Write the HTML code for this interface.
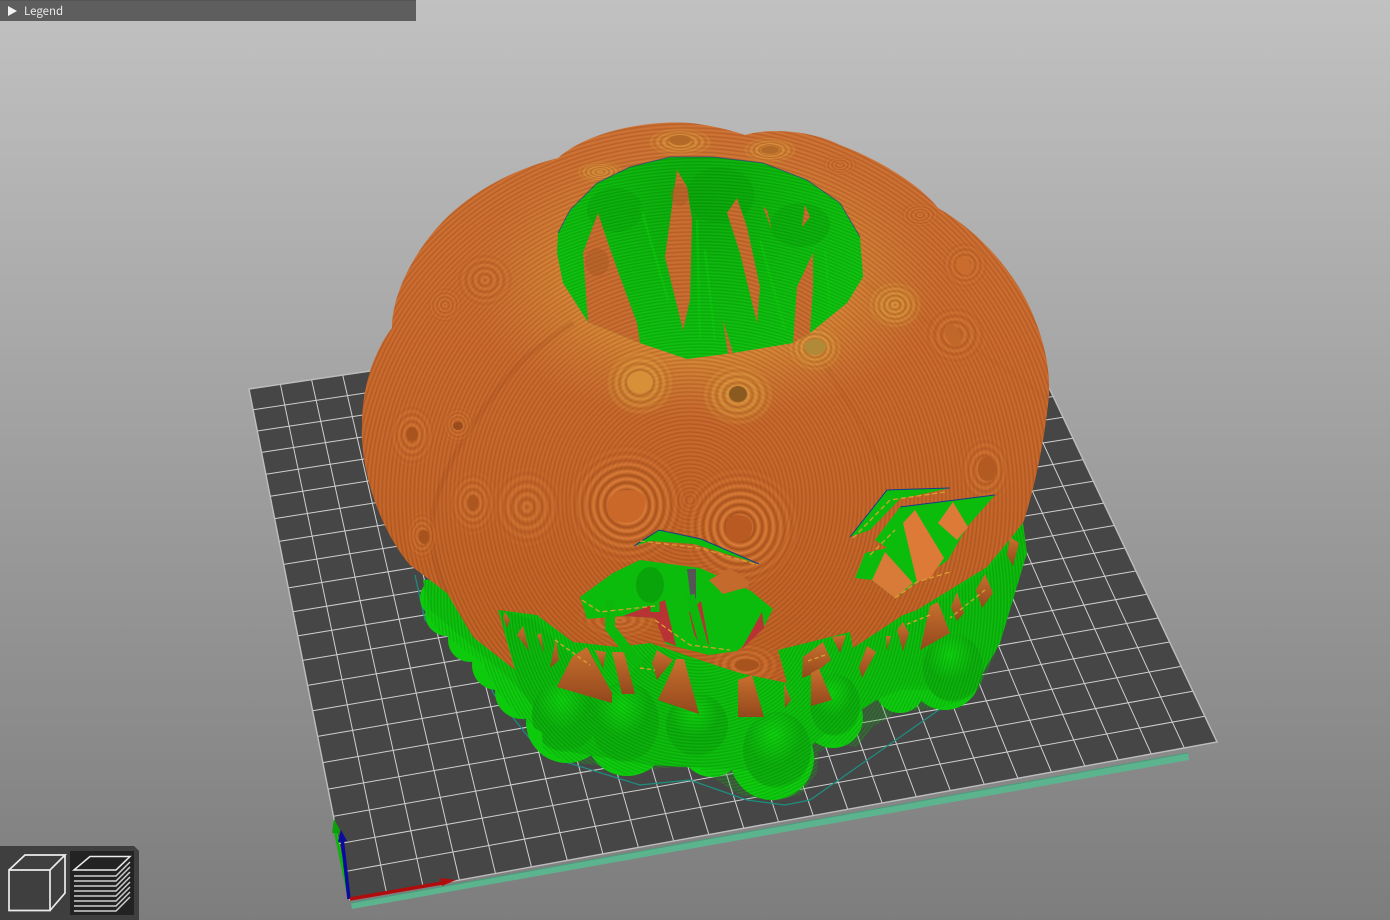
<!DOCTYPE html>
<html lang="en">
<head>
<meta charset="utf-8">
<title>Legend</title>
<style>
html,body{margin:0;padding:0;width:1390px;height:920px;overflow:hidden;background:#a0a0a0}
#s{position:absolute;left:0;top:0;width:1390px;height:920px;display:block}
#legend{position:absolute;left:0;top:0;width:416px;height:21px;background:#5e5e5e;border-top:1px solid #545454;box-sizing:border-box}
#legend .t{position:absolute;left:8px;top:5px;width:0;height:0;border-left:9px solid #f2f2f2;border-top:5px solid transparent;border-bottom:5px solid transparent}
#legend .l{position:absolute;left:24px;top:2px;font:11.5px/17px "Noto Sans CJK JP","Liberation Sans",sans-serif;color:#e8e8e8}
</style>
</head>
<body>
<svg id="s" xmlns="http://www.w3.org/2000/svg" width="1390" height="920" viewBox="0 0 1390 920">
<defs>
<linearGradient id="bg" x1="0" y1="0" x2="0" y2="1"><stop offset="0" stop-color="#c1c1c1"/><stop offset="1" stop-color="#7d7d7d"/></linearGradient>
<linearGradient id="body" x1="0" y1="0" x2="0" y2="1"><stop offset="0" stop-color="#cc7033"/><stop offset=".4" stop-color="#c7662c"/><stop offset="1" stop-color="#b85a20"/></linearGradient>
<radialGradient id="gold" gradientUnits="userSpaceOnUse" cx="705" cy="280" r="235" gradientTransform="translate(705 280) scale(1 .6) translate(-705 -280)"><stop offset="0" stop-color="#e6a63c" stop-opacity=".95"/><stop offset=".6" stop-color="#dd9a3a" stop-opacity=".6"/><stop offset="1" stop-color="#d08a38" stop-opacity="0"/></radialGradient>
<radialGradient id="fine" gradientUnits="userSpaceOnUse" cx="690" cy="500" r="4" spreadMethod="repeat"><stop offset="0" stop-color="#8f4214" stop-opacity=".38"/><stop offset=".5" stop-color="#e88d48" stop-opacity=".18"/><stop offset="1" stop-color="#8f4214" stop-opacity=".38"/></radialGradient>
<radialGradient id="r1" cx=".5" cy=".5" r=".06" spreadMethod="repeat"><stop offset="0" stop-color="#a34e1b"/><stop offset=".5" stop-color="#e0823c"/><stop offset="1" stop-color="#a34e1b"/></radialGradient>
<radialGradient id="r2" cx=".5" cy=".5" r=".1" spreadMethod="repeat"><stop offset="0" stop-color="#ac5520"/><stop offset=".5" stop-color="#d97e3a"/><stop offset="1" stop-color="#ac5520"/></radialGradient>
<radialGradient id="r3" cx=".5" cy=".5" r=".09" spreadMethod="repeat"><stop offset="0" stop-color="#b06a24"/><stop offset=".5" stop-color="#e8aa48"/><stop offset="1" stop-color="#b06a24"/></radialGradient>
<radialGradient id="fg" cx=".5" cy=".5" r=".5"><stop offset="0" stop-color="#fff"/><stop offset=".55" stop-color="#fff" stop-opacity=".8"/><stop offset="1" stop-color="#fff" stop-opacity="0"/></radialGradient>
<mask id="fade" maskContentUnits="objectBoundingBox"><rect width="1" height="1" fill="url(#fg)"/></mask>
<radialGradient id="gf" gradientUnits="userSpaceOnUse" cx="700" cy="600" r="3.2" spreadMethod="repeat"><stop offset="0" stop-color="#007a00" stop-opacity=".28"/><stop offset=".5" stop-color="#20e020" stop-opacity=".22"/><stop offset="1" stop-color="#007a00" stop-opacity=".28"/></radialGradient>
<linearGradient id="gt" x1="0" y1="0" x2="1" y2="0"><stop offset="0" stop-color="#0ab00a"/><stop offset=".5" stop-color="#0cbc0c"/><stop offset="1" stop-color="#0ab40a"/></linearGradient>
<radialGradient id="ball" cx=".45" cy=".3" r=".72"><stop offset="0" stop-color="#0ed20e"/><stop offset=".55" stop-color="#0aa60a"/><stop offset=".92" stop-color="#0aa60a" stop-opacity=".9"/><stop offset="1" stop-color="#0aa60a" stop-opacity="0"/></radialGradient>
<radialGradient id="hole" gradientUnits="userSpaceOnUse" cx="700" cy="200" r="170"><stop offset="0" stop-color="#0aa20a"/><stop offset=".5" stop-color="#0cb40c"/><stop offset="1" stop-color="#0fbe0f"/></radialGradient>
<linearGradient id="lowo" x1="0" y1="0" x2="0" y2="1"><stop offset="0" stop-color="#c8702e"/><stop offset="1" stop-color="#93481c"/></linearGradient>
<clipPath id="shell"><path d="M498,610 L537,615 L573,642 L617,647 L650,643 L700,660 L740,673 L787,683 L778,650 L850,632 L853,648 L903,615 L917,610 L987,567 L1023,523 C1033,495 1045,440 1049,395 C1050,370 1045,345 1035,320 C1020,280 985,235 938,208 C920,185 880,160 840,145 C810,130 770,128 745,135 C730,130 710,125 690,123 C650,120 590,130 558,158 C530,165 490,180 455,210 C420,240 392,290 392,328 C375,350 362,385 362,425 C360,470 380,530 410,565 L447,593 L473,637 L515,670 Z"/></clipPath>
<clipPath id="gclip"><path d="M423,580 L425,613 L440,632 L483,663 L495,688 L517,715 L542,733 L543,750 L567,762 L597,765 L627,775 L660,768 L697,767 L740,795 L773,801 L800,795 L817,773 L818,753 L833,743 L857,747 L873,727 L897,712 L940,708 L973,697 L980,687 L1000,643 L1027,553 L1023,523 Z"/></clipPath>
<clipPath id="holeclip"><polygon points="558,233 570,210 597,183 630,167 670,157 713,157 763,163 807,180 840,203 860,237 863,277 847,303 810,333 793,343 733,353 687,359 640,343 588,322 563,283 557,253"/></clipPath>
</defs>
<rect width="1390" height="920" fill="url(#bg)"/>
<!-- bed -->
<polygon points="249,389 997,278 1217,742 350,900" fill="#464646"/>
<path fill="none" stroke="#cfcfcf" stroke-width="1" d="M280.4,384.3L386.6,893.3M311.6,379.7L423.1,886.7M342.7,375.1L459.4,880.1M373.7,370.5L495.5,873.5M404.6,365.9L531.5,867M435.3,361.4L567.3,860.5M465.9,356.8L602.9,853.9M496.4,352.3L638.4,847.5M526.8,347.8L673.7,841.1M557.1,343.3L708.9,834.7M587.2,338.9L743.8,828.3M617.2,334.4L778.6,822M647.1,330L813.3,815.7M676.9,325.6L847.8,809.4M706.6,321.2L882.2,803.2M736.2,316.8L916.4,797M765.6,312.4L950.4,790.8M794.9,308.1L984.3,784.6M824.2,303.7L1018,778.5M853.3,299.4L1051.6,772.4M882.2,295.1L1085,766.3M911.1,290.8L1118.3,760.2M939.9,286.6L1151.4,754.2M968.6,282.3L1184.4,748.2M253.1,409.8L1006,297.1M257.3,431L1015.2,316.4M261.5,452.4L1024.4,336M265.8,474.2L1033.9,355.9M270.2,496.2L1043.4,376M274.6,518.6L1053.1,396.5M279.1,541.4L1063.2,417.2M283.7,564.4L1072.9,438.2M288.3,587.9L1083.1,459.6M293,611.7L1093.3,481.2M297.8,635.9L1103.6,503.1M302.7,660.4L1114.3,525.5M307.6,685.4L1124.9,548M312.6,710.7L1135.9,571M317.7,736.4L1147,594.3M322.9,762.6L1158.2,618M328.1,789.1L1169.6,642M333.5,816.3L1181.2,666.4M338.9,843.7L1192.9,691.2M344.4,871.6L1204.7,716.3"/>
<polygon points="249,389 997,278 1217,742 350,900" fill="none" stroke="#bdbdbd" stroke-width="1.4"/>
<!-- prime strip -->
<polygon points="351,903 1188,753 1189,760 352,909" fill="#5cb48f"/>
<polyline points="351,903 1188,753" fill="none" stroke="#4b9c7a" stroke-width="1"/>
<!-- skirt -->
<polyline points="415,575 425,620 483,660 493,693 543,755 640,785 690,780 747,800 785,805 810,800 943,707 965,695 985,660 990,610" fill="none" stroke="#1d8f80" stroke-width="1.2"/>
<!-- green brim -->
<g fill="#0dca0d">
<circle cx="440" cy="598" r="20"/><circle cx="447" cy="614" r="22"/><circle cx="470" cy="640" r="22"/><circle cx="497" cy="665" r="25"/><circle cx="522" cy="692" r="27"/>
<circle cx="567" cy="722" r="41"/><circle cx="627" cy="735" r="41"/><circle cx="697" cy="733" r="35"/><circle cx="712" cy="745" r="32"/><circle cx="772" cy="758" r="42"/><circle cx="833" cy="718" r="30"/><circle cx="900" cy="688" r="25"/><circle cx="945" cy="675" r="35"/>
</g>
<path d="M423,580 L430,610 L500,670 L560,730 L700,750 L775,770 L830,720 L900,690 L973,690 L1000,643 L1027,553 L1023,523 L700,560 Z" fill="#0cbc0c"/>
<!-- cones -->
<g clip-path="url(#gclip)">
<path d="M500,610 L535,620 L575,660 L612,700 L640,660 L660,650 L700,670 L740,690 L780,680 L810,660 L850,640 L910,620 L990,570 L1023,523 L1025,560 L1000,640 L975,685 L900,685 L830,730 L780,772 L650,765 L570,752 L520,690 Z" fill="url(#gt)"/>
<ellipse cx="565" cy="715" rx="33" ry="37" fill="url(#ball)"/>
<ellipse cx="625" cy="722" rx="34" ry="40" fill="url(#ball)"/>
<ellipse cx="697" cy="725" rx="31" ry="31" fill="url(#ball)"/>
<ellipse cx="777" cy="750" rx="34" ry="38" fill="url(#ball)"/>
<ellipse cx="835" cy="705" rx="25" ry="31" fill="url(#ball)"/>
<ellipse cx="953" cy="668" rx="30" ry="34" fill="url(#ball)"/>
</g>
<rect x="410" y="500" width="620" height="310" fill="url(#gf)" clip-path="url(#gclip)"/>
<!-- orange behind trees -->
<g fill="url(#lowo)">
<polygon points="557,687 572,657 587,647 612,693 612,703"/>
<polygon points="595,650 603,669 606,652"/>
<polygon points="612,652 624,652 635,694 622,694"/>
<polygon points="657,650 673,660 657,680 652,663"/>
<polygon points="676,659 684,659 699,714 658,700 672,670"/>
<polygon points="738,680 752,675 764,717 738,717"/>
<polygon points="803,657 823,642 831,660 815,673 802,678"/>
<polygon points="832,637 846,635 840,653"/>
<polygon points="811,673 819,669 832,700 811,706"/>
<polygon points="784,683 791,700 785,708"/>
<polygon points="867,646 876,652 862,678 859,667"/>
<polygon points="886,636 891,636 887,651"/>
<polygon points="903,622 909,633 903,651 897,630"/>
<polygon points="930,606 938,602 950,633 920,650 926,623"/>
<polygon points="957,592 964,613 957,621 951,607"/>
<polygon points="985,574 993,593 982,608 976,590"/>
<polygon points="1010,537 1019,543 1013,566 1007,555"/>
<polygon points="517,635 523,626 529,651"/>
<polygon points="537,635 544,653 541,633"/>
<polygon points="556,638 559,660 550,668"/>
<polygon points="505,612 510,620 507,628 503,618"/>
</g>
<path d="M825,655 L805,662 M985,590 L950,618 M930,615 L905,625 M640,668 L655,670 M555,640 L590,665" fill="none" stroke="#d8a030" stroke-width="1.4" stroke-dasharray="4 3"/>
<!-- shell -->
<path d="M498,610 L537,615 L573,642 L617,647 L650,643 L700,660 L740,673 L787,683 L778,650 L850,632 L853,648 L903,615 L917,610 L987,567 L1023,523 C1033,495 1045,440 1049,395 C1050,370 1045,345 1035,320 C1020,280 985,235 938,208 C920,185 880,160 840,145 C810,130 770,128 745,135 C730,130 710,125 690,123 C650,120 590,130 558,158 C530,165 490,180 455,210 C420,240 392,290 392,328 C375,350 362,385 362,425 C360,470 380,530 410,565 L447,593 L473,637 L515,670 Z" fill="url(#body)"/>
<g clip-path="url(#shell)">
<rect x="360" y="120" width="700" height="560" fill="url(#gold)"/>
<rect x="360" y="120" width="700" height="560" fill="url(#fine)"/>
<!-- seams -->
<path d="M447,593 C430,560 430,525 435,505 C445,460 487,400 520,363 C540,345 555,335 573,323" fill="none" stroke="#9a4a1a" stroke-width="5" opacity=".22"/>
<path d="M820,357 C840,390 867,430 880,463" fill="none" stroke="#a8541e" stroke-width="4" opacity=".18"/>
<path d="M865,282 C920,320 1000,360 1048,400" fill="none" stroke="#b25c22" stroke-width="4" opacity=".14"/>
<!-- ring patches -->
<ellipse cx="627" cy="505" rx="62" ry="62" fill="url(#r1)" mask="url(#fade)"/>
<ellipse cx="740" cy="527" rx="62" ry="62" fill="url(#r1)" mask="url(#fade)"/>
<g opacity=".7">
<ellipse cx="527" cy="507" rx="38" ry="42" fill="url(#r2)" mask="url(#fade)"/>
<ellipse cx="473" cy="503" rx="26" ry="34" fill="url(#r2)" mask="url(#fade)"/>
<ellipse cx="412" cy="435" rx="26" ry="34" fill="url(#r2)" mask="url(#fade)"/>
<ellipse cx="458" cy="425" rx="18" ry="20" fill="url(#r2)" mask="url(#fade)"/>
<ellipse cx="422" cy="536" rx="18" ry="26" fill="url(#r2)" mask="url(#fade)"/>
<ellipse cx="985" cy="470" rx="28" ry="36" fill="url(#r2)" mask="url(#fade)"/>
<ellipse cx="955" cy="335" rx="34" ry="32" fill="url(#r2)" mask="url(#fade)"/>
<ellipse cx="965" cy="265" rx="26" ry="26" fill="url(#r2)" mask="url(#fade)"/>
<ellipse cx="640" cy="383" rx="38" ry="36" fill="url(#r3)" mask="url(#fade)"/>
<ellipse cx="738" cy="395" rx="40" ry="34" fill="url(#r3)" mask="url(#fade)"/>
<ellipse cx="815" cy="348" rx="30" ry="26" fill="url(#r3)" mask="url(#fade)"/>
<ellipse cx="895" cy="305" rx="30" ry="26" fill="url(#r3)" mask="url(#fade)"/>
<ellipse cx="680" cy="142" rx="36" ry="16" fill="url(#r3)" mask="url(#fade)"/>
<ellipse cx="770" cy="150" rx="30" ry="14" fill="url(#r3)" mask="url(#fade)"/>
<ellipse cx="600" cy="172" rx="26" ry="12" fill="url(#r3)" mask="url(#fade)"/>
<ellipse cx="840" cy="165" rx="20" ry="12" fill="url(#r2)" mask="url(#fade)"/>
<ellipse cx="920" cy="215" rx="22" ry="14" fill="url(#r2)" mask="url(#fade)"/>
<ellipse cx="620" cy="620" rx="45" ry="22" fill="url(#r2)" mask="url(#fade)"/>
<ellipse cx="745" cy="665" rx="42" ry="26" fill="url(#r2)" mask="url(#fade)"/>
<ellipse cx="485" cy="280" rx="32" ry="30" fill="url(#r2)" mask="url(#fade)"/>
<ellipse cx="445" cy="305" rx="20" ry="20" fill="url(#r2)" mask="url(#fade)"/>
</g>
<!-- eye centres -->
<path d="M627,490 C645,490 649,498 643,512 C638,525 618,526 609,516 C604,502 610,490 627,490Z" fill="#c96828"/>
<path d="M728,517 C745,511 754,520 752,530 C748,544 735,546 726,535 Z" fill="#b85a22"/>
<ellipse cx="412" cy="434" rx="5.5" ry="7" fill="#a8531e"/>
<ellipse cx="458" cy="426" rx="5" ry="4" fill="#9a4c1c"/>
<ellipse cx="473" cy="503" rx="5" ry="8" fill="#ad561f"/>
<ellipse cx="424" cy="537" rx="5" ry="7" fill="#a8531e"/>
<ellipse cx="987" cy="469" rx="9" ry="12" fill="#b35a22"/>
<ellipse cx="953" cy="335" rx="7" ry="12" fill="#c0682a" transform="rotate(-28 953 335)"/>
<ellipse cx="964" cy="266" rx="7" ry="10" fill="#c96c2e" transform="rotate(-30 964 266)"/>
<ellipse cx="640" cy="382" rx="13" ry="11" fill="#d89038"/>
<ellipse cx="738" cy="394" rx="9" ry="8" fill="#8a5a20"/>
<ellipse cx="815" cy="347" rx="11" ry="8" fill="#b08a38"/>
<ellipse cx="680" cy="140" rx="11" ry="5" fill="#b36a28"/>
<ellipse cx="770" cy="150" rx="9" ry="4" fill="#b36a28"/>
<ellipse cx="747" cy="665" rx="12" ry="6" fill="#a8531e"/>
</g>
<!-- top opening -->
<polygon points="558,233 570,210 597,183 630,167 670,157 713,157 763,163 807,180 840,203 860,237 863,277 847,303 810,333 793,343 733,353 687,359 640,343 588,322 563,283 557,253" fill="url(#hole)"/>
<g clip-path="url(#holeclip)">
<g fill="none" stroke="#0ccc0c" stroke-width="2.5" opacity=".6">
<path d="M697,220 L700,340"/><path d="M705,250 L715,340"/><path d="M825,250 L830,310"/><path d="M640,205 L668,300"/><path d="M760,240 L785,330"/>
</g>
<ellipse cx="615" cy="210" rx="28" ry="22" fill="#089a08" opacity=".45"/>
<ellipse cx="720" cy="195" rx="34" ry="28" fill="#089a08" opacity=".5"/>
<ellipse cx="800" cy="225" rx="30" ry="22" fill="#089a08" opacity=".45"/>
<rect x="550" y="150" width="320" height="215" fill="url(#gf)"/>
</g>
<path d="M558,233 L570,210 L597,183 L630,167 L670,157 L713,157 L763,163 L807,180 L840,203 L860,237" fill="none" stroke="#1a3a8a" stroke-width="1" opacity=".6"/>
<g fill="#c66a2e">
<g id="holegaps">
<polygon points="598,213 583,253 588,322 640,343 637,323 620,277 608,243"/>
<polygon points="677,170 665,257 683,330 690,300 692,220 687,187"/>
<polygon points="737,198 727,213 740,253 757,323 760,287 747,227"/>
<polygon points="723,320 733,353 728,354"/>
<polygon points="813,253 797,287 793,343 810,333 813,287"/>
<polygon points="805,205 802,227 810,217"/>
<polygon points="763,207 772,230 767,210"/>
</g>
</g>
<use href="#holegaps" fill="url(#fine)"/>
<ellipse cx="597" cy="262" rx="12" ry="14" fill="#a85a22" opacity=".5"/>
<ellipse cx="680" cy="195" rx="9" ry="11" fill="#a85a22" opacity=".5"/>
<!-- second opening -->
<polygon points="580,597 613,573 640,560 700,568 751,591 773,609 762,630 737,651 709,655 666,644 655,618 623,616 587,619" fill="#0cbc0c"/>
<g fill="#b83434">
<polygon points="623,616 665,600 676,646 664,641 655,618"/>
<polygon points="689,612 701,601 709,644 703,651 694,634"/>
<polygon points="762,612 764,628 741,650"/>
</g>
<polygon points="687,569 696,569 696,601 691,601" fill="#555"/>
<polygon points="709,580 730,568 750,582 748,587 723,594" fill="#c46a2c"/>
<path d="M610,600 L610,628 L640,665" fill="none" stroke="#0cb80c" stroke-width="10"/>
<path d="M655,565 L655,612 M690,595 L705,650" fill="none" stroke="#0cb80c" stroke-width="9"/>
<ellipse cx="650" cy="585" rx="14" ry="18" fill="#09a409"/>
<polygon points="634,546 659,530 701,539 759,564 694,544 651,541" fill="#0cbc0c"/>
<path d="M634,546 L659,530 L701,539 L759,564" fill="none" stroke="#1a3a8a" stroke-width="1"/>
<path d="M640,541 L700,548 L758,565" fill="none" stroke="#d8a030" stroke-width="1.2" stroke-dasharray="5 3"/>
<path d="M582,600 L600,612 L655,606 M655,620 L690,645 L730,650" fill="none" stroke="#d8a030" stroke-width="1.3" stroke-dasharray="5 3"/>
<!-- third opening -->
<polygon points="855,578 865,553 887,548 875,540 900,507 995,495 967,527 948,560 917,582 895,598 872,580" fill="#0cbc0c"/>
<polygon points="872,580 885,552 913,583 895,598" fill="#d87a38"/>
<polygon points="903,523 915,510 944,558 930,578 917,582" fill="#dd7a38"/>
<polygon points="938,523 953,502 968,527 957,540" fill="#dd7a38"/>
<path d="M900,507 L995,495" fill="none" stroke="#1a3a8a" stroke-width="1"/>
<polygon points="850,537 887,490 950,488 900,499 870,530" fill="#0cbc0c"/>
<path d="M850,537 L887,490 L950,488" fill="none" stroke="#1a3a8a" stroke-width="1"/>
<path d="M853,538 L890,500 L945,492 M870,555 L895,530" fill="none" stroke="#d8a030" stroke-width="1.3" stroke-dasharray="5 3"/>
<path d="M895,598 L917,582 L950,572" fill="none" stroke="#d8a030" stroke-width="1.3" stroke-dasharray="5 3"/>
<!-- axes -->
<line x1="349" y1="897" x2="335" y2="830" stroke="#0cb40c" stroke-width="3"/>
<polygon points="332,833 334,819 340,830 339,835 336,833" fill="#0ca00c"/>
<line x1="349" y1="899" x2="342" y2="838" stroke="#0a0aa0" stroke-width="3.5"/>
<polygon points="338,842 341,830 347,841" fill="#0a0a9c"/>
<line x1="350" y1="899" x2="442" y2="883" stroke="#b00c0c" stroke-width="3.5"/>
<polygon points="440,878 456,880 442,886" fill="#b00c0c"/>
<!-- view toolbar -->
<path d="M0,846 H134 L139,851 V920 H0 Z" fill="#3f3f3f"/>
<rect x="70" y="851" width="64" height="64" fill="#232323"/>
<g fill="none" stroke="#ececec" stroke-width="1.7">
<path d="M9,870 H50 V910.5 H9 Z M9,870 L25,855 H65 L50,870 M65,855 V893 L50,910.5"/>
</g>
<g fill="none" stroke="#ececec" stroke-width="1.5">
<path d="M74,870 L90,856.5 H130 L116,870 Z"/>
<path stroke="#cfcfcf" d="M74,876 H116 L130,862 M74,881 H116 L130,867 M74,886 H116 L130,872 M74,891 H116 L130,877 M74,896 H116 L130,882 M74,901 H116 L130,887 M74,906 H116 L130,892 M74,911 H116 L130,897"/>
</g>
</svg>
<div id="legend"><div class="t"></div><div class="l">Legend</div></div>
</body>
</html>
